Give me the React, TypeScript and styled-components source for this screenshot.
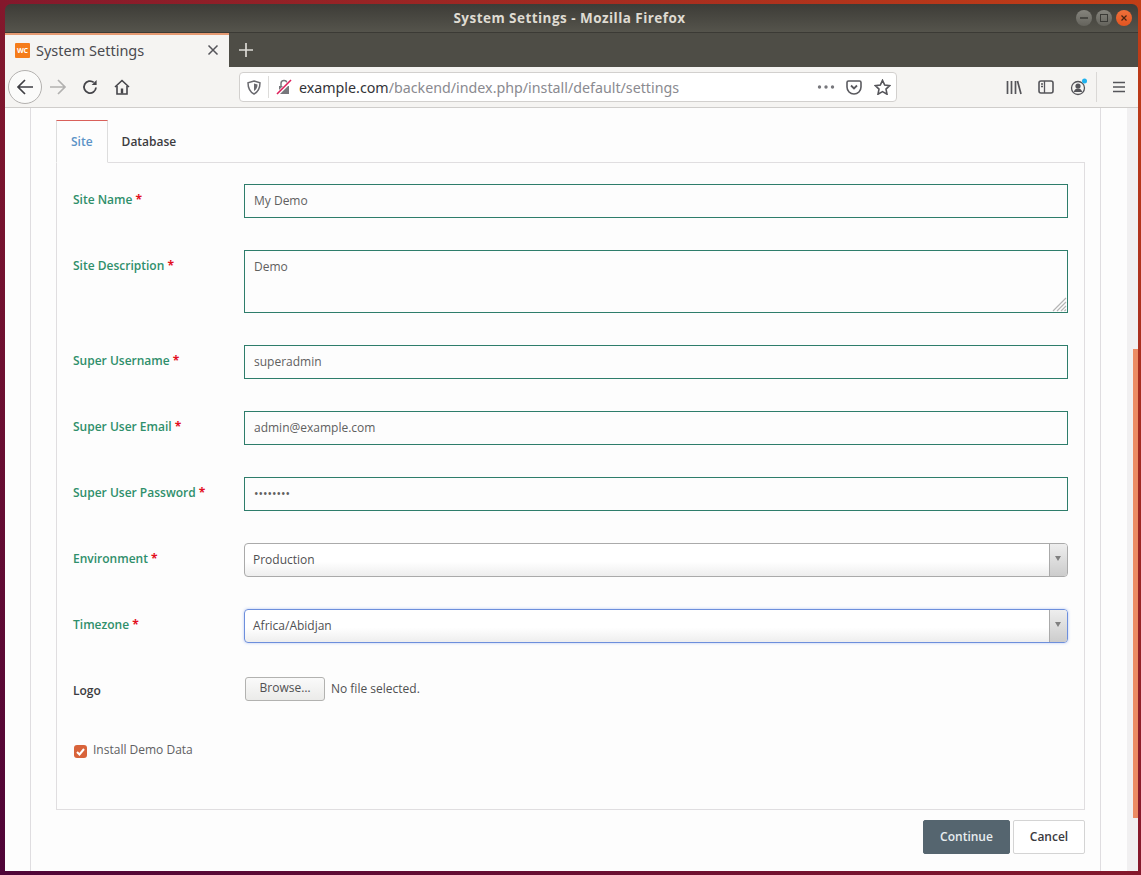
import { FC, ReactElement, ReactNode } from 'react';
import styled, { createGlobalStyle } from 'styled-components';

const GlobalStyle = createGlobalStyle`
    html, body, #root {
        margin: 0;
        height: 100%;
    }
    body {
        width: 1141px;
        height: 875px;
        overflow: hidden;
        font-family: 'Open Sans', 'Noto Sans', sans-serif;
        background: linear-gradient(to top right, #4f0538 0%, #84182c 50%, #c23e16 100%);
    }
`;

const Desktop = styled.div`
    width: 1141px;
    height: 875px;
    padding: 4px 3px 4px 5px;
    box-sizing: border-box;
`;

const Window = styled.div`
    height: 867px;
    display: flex;
    flex-direction: column;
    border-radius: 6px 6px 0 0;
    overflow: hidden;
`;

const TitleBar = styled.div`
    height: 29px;
    flex: none;
    display: flex;
    align-items: center;
    justify-content: flex-end;
    position: relative;
    padding-right: 6px;
    gap: 4px;
    background: linear-gradient(#3d3c37, #55544c);
    border-bottom: 1px solid #3b3a35;
    box-sizing: border-box;
`;

const WindowTitle = styled.div`
    position: absolute;
    left: 0;
    right: 0;
    text-align: center;
    padding-right: 4px;
    font-size: 13.5px;
    font-weight: 700;
    letter-spacing: 0.46px;
    color: #dfdbd2;
`;

const WindowButton = styled.div<{ $close?: boolean }>`
    width: 16px;
    height: 16px;
    border-radius: 50%;
    display: flex;
    align-items: center;
    justify-content: center;
    background: ${(p) => (p.$close ? 'linear-gradient(#f0703a, #e25420)' : 'linear-gradient(#85847d, #64635c)')};
    svg {
        display: block;
    }
`;

const TabStrip = styled.div`
    height: 34px;
    flex: none;
    display: flex;
    background: #4e4d46;
`;

const BrowserTab = styled.div`
    width: 224px;
    box-sizing: border-box;
    border-top: 2px solid #e59a72;
    background: #f5f4f2;
    display: flex;
    align-items: center;
    padding: 0 10px 2px;
    gap: 6px;
    color: #4a4a4f;
    font-size: 14.5px;
    font-family: 'Noto Sans', sans-serif;
`;

const Favicon = styled.div`
    width: 15px;
    height: 15px;
    flex: none;
    background: #f57c1a;
    border-radius: 1px;
    color: #fff;
    font-size: 7px;
    font-weight: 700;
    line-height: 15px;
    text-align: center;
`;

const TabLabel = styled.span`
    flex: 1;
`;

const NewTab = styled.div`
    width: 34px;
    display: flex;
    align-items: center;
    justify-content: center;
`;

const Toolbar = styled.div`
    height: 41px;
    flex: none;
    box-sizing: border-box;
    display: flex;
    align-items: center;
    padding-left: 3px;
    background: #f5f4f2;
    border-bottom: 1px solid #cfcdcb;
`;

const BackCircle = styled.div`
    width: 34px;
    height: 34px;
    box-sizing: border-box;
    border: 1px solid #b3b1af;
    border-radius: 50%;
    background: #fbfbfa;
    display: flex;
    align-items: center;
    justify-content: center;
    flex: none;
`;

const ToolIcon = styled.div<{ $w?: number }>`
    width: ${(p) => p.$w ?? 32}px;
    height: 32px;
    flex: none;
    display: flex;
    align-items: center;
    justify-content: center;
`;

const UrlBar = styled.div`
    width: 658px;
    height: 30px;
    margin-left: 101px;
    margin-right: 101px;
    flex: none;
    box-sizing: border-box;
    display: flex;
    align-items: center;
    background: #fff;
    border: 1px solid #d2d0ce;
    border-radius: 4px;
    font-family: 'Noto Sans', sans-serif;
    font-size: 14.25px;
`;

const UrlDivider = styled.div`
    width: 1px;
    height: 22px;
    background: #dddcda;
    flex: none;
`;

const UrlText = styled.div`
    flex: 1;
    color: #8a8a90;
    white-space: nowrap;
    b {
        font-weight: 400;
        color: #333338;
    }
`;

const ToolDivider = styled.div`
    width: 1px;
    height: 30px;
    margin: 0 6px 0 2px;
    background: #dad8d6;
    flex: none;
`;

const Viewport = styled.div`
    flex: 1;
    min-height: 0;
    display: flex;
    background: #fdfdfd;
`;

const Page = styled.div`
    flex: 1;
    padding-left: 25px;
`;

const Box = styled.div`
    width: 1071px;
    height: 100%;
    box-sizing: border-box;
    border-left: 1px solid #dfdde0;
    border-right: 1px solid #dfdde0;
    padding: 12px 15px 0 25px;
`;

const Tabs = styled.div`
    display: flex;
    margin-bottom: -1px;
    position: relative;
`;

const Tab = styled.div<{ $active?: boolean }>`
    height: 43px;
    box-sizing: border-box;
    padding: 0 14px 0 ${(p) => (p.$active ? 14 : 13)}px;
    border: 1px solid ${(p) => (p.$active ? '#ddd' : 'transparent')};
    border-top-color: ${(p) => (p.$active ? '#d9605a' : 'transparent')};
    border-bottom-color: ${(p) => (p.$active ? '#fdfdfd' : 'transparent')};
    line-height: 41px;
    font-size: 12px;
    font-weight: 600;
    color: ${(p) => (p.$active ? '#5b93c7' : '#3c3c40')};
`;

const Panel = styled.div`
    height: 648px;
    box-sizing: border-box;
    border: 1px solid #e0dee0;
    padding: 21px 16px 0;
    display: flex;
    flex-direction: column;
    gap: 32px;
`;

const Row = styled.div`
    display: grid;
    grid-template-columns: 171px 1fr;
`;

const Label = styled.label<{ $plain?: boolean }>`
    padding-top: 7px;
    font-size: 12px;
    line-height: 17px;
    font-weight: 600;
    color: ${(p) => (p.$plain ? '#3c3c40' : '#2f8f6b')};
`;

const Required = styled.span`
    color: #e3101f;
    font-weight: 700;
`;

const TextInput = styled.input`
    width: 100%;
    height: 34px;
    box-sizing: border-box;
    border: 1px solid #2e7d6b;
    border-radius: 0;
    background: #fdfdfd;
    padding: 0 9px 2px;
    font-family: inherit;
    font-size: 12px;
    color: #60605f;
    outline: none;
`;

const AreaWrap = styled.div`
    position: relative;
    height: 63px;
`;

const TextArea = styled.textarea`
    display: block;
    width: 100%;
    height: 63px;
    box-sizing: border-box;
    border: 1px solid #2e7d6b;
    border-radius: 0;
    background: #fdfdfd;
    padding: 7px 9px;
    font-family: inherit;
    font-size: 12px;
    color: #60605f;
    outline: none;
    resize: none;
`;

const ResizeGrip = styled.svg`
    position: absolute;
    right: 1px;
    bottom: 1px;
`;

const Select = styled.div<{ $focus?: boolean }>`
    height: 34px;
    box-sizing: border-box;
    display: flex;
    border: 1px solid ${(p) => (p.$focus ? '#6d8fdc' : '#aaa')};
    border-radius: 4px;
    overflow: hidden;
    background: linear-gradient(#fff 55%, #eeeeee);
    box-shadow: ${(p) => (p.$focus ? '0 0 3px rgba(90, 130, 230, 0.45)' : 'none')};
`;

const SelectValue = styled.div`
    flex: 1;
    padding-left: 8px;
    line-height: 32px;
    font-size: 12px;
    color: #505052;
`;

const SelectArrow = styled.div`
    width: 17px;
    border-left: 1px solid #aaa;
    background: linear-gradient(#eeeeee, #cccccc);
    position: relative;
    &::after {
        content: '';
        position: absolute;
        left: 5px;
        top: 12px;
        border: 3.5px solid transparent;
        border-top: 5px solid #808080;
        border-bottom: 0;
    }
`;

const FileField = styled.div`
    display: flex;
    align-items: center;
    gap: 6px;
    height: 24px;
    box-sizing: border-box;
    margin: 2px 0 0 1px;
    padding-bottom: 2px;
    font-size: 12px;
    color: #505052;
`;

const BrowseButton = styled.button`
    width: 80px;
    height: 24px;
    padding: 0 0 3px;
    margin-bottom: -2px;
    border: 1px solid #b2b2b0;
    border-radius: 3px;
    background: linear-gradient(#fafafa, #ebebe9);
    font-family: inherit;
    font-size: 12px;
    color: #505052;
`;

const CheckRow = styled.div`
    display: flex;
    align-items: flex-start;
    gap: 6px;
    padding: 8px 0 0 1px;
    font-size: 12px;
    line-height: 17px;
    color: #606062;
`;

const CheckMark = styled.div`
    width: 13px;
    height: 13px;
    margin-top: 4px;
    border-radius: 3px;
    background: #d8633a;
    display: flex;
    align-items: center;
    justify-content: center;
    flex: none;
`;

const Actions = styled.div`
    display: flex;
    justify-content: flex-end;
    gap: 3px;
    padding-top: 10px;
`;

const ActionButton = styled.button<{ $primary?: boolean }>`
    height: 34px;
    width: ${(p) => (p.$primary ? 87 : 72)}px;
    padding: 0 0 2px;
    border: 1px solid ${(p) => (p.$primary ? '#55656f' : '#d4d4d4')};
    border-radius: 2px;
    background: ${(p) => (p.$primary ? '#55656f' : '#fff')};
    color: ${(p) => (p.$primary ? '#e8edf0' : '#3a3a40')};
    font-family: inherit;
    font-size: 12px;
    font-weight: 600;
`;

const ScrollTrack = styled.div`
    width: 11px;
    flex: none;
    display: flex;
    justify-content: flex-end;
    padding-top: 241px;
    box-sizing: border-box;
    background: #f1f0f1;
`;

const ScrollThumb = styled.div`
    width: 5px;
    height: 469px;
    background: #ec8c64;
`;

interface FieldProps {
    label: string;
    required?: boolean;
    plain?: boolean;
    children: ReactNode;
}

const Field: FC<FieldProps> = (props: FieldProps): ReactElement => {
    const { label, required, plain, children } = props;

    return (
        <Row>
            <Label $plain={plain}>
                {label}
                {required && <Required> *</Required>}
            </Label>
            <div>{children}</div>
        </Row>
    );
};

const BrowserChrome: FC = (): ReactElement => (
    <>
        <TitleBar>
            <WindowTitle>System Settings - Mozilla Firefox</WindowTitle>
            <WindowButton>
                <svg width="10" height="10"><path d="M1 5h8" stroke="#3a3a36" strokeWidth="1.3" /></svg>
            </WindowButton>
            <WindowButton>
                <svg width="10" height="10"><rect x="1.5" y="1.5" width="7" height="7" fill="none" stroke="#3a3a36" /></svg>
            </WindowButton>
            <WindowButton $close>
                <svg width="10" height="10"><path d="M2.5 2.5l5 5M7.5 2.5l-5 5" stroke="#4a2410" strokeWidth="1.2" /></svg>
            </WindowButton>
        </TitleBar>
        <TabStrip>
            <BrowserTab>
                <Favicon>WC</Favicon>
                <TabLabel>System Settings</TabLabel>
                <svg width="12" height="12"><path d="M1.5 1.5l9 9M10.5 1.5l-9 9" stroke="#55555a" strokeWidth="1.5" /></svg>
            </BrowserTab>
            <NewTab>
                <svg width="16" height="16"><path d="M8 1v14M1 8h14" stroke="#dcdad5" strokeWidth="1.7" /></svg>
            </NewTab>
        </TabStrip>
        <Toolbar>
            <BackCircle>
                <svg width="18" height="18" fill="none" stroke="#3f3f44" strokeWidth="1.7"><path d="M17 9H2M9 2L2 9l7 7" /></svg>
            </BackCircle>
            <ToolIcon>
                <svg width="18" height="18" fill="none" stroke="#b2b1b0" strokeWidth="1.7"><path d="M1 9h15M9 2l7 7-7 7" /></svg>
            </ToolIcon>
            <ToolIcon>
                <svg width="16" height="16" fill="none" stroke="#45454a" strokeWidth="1.8">
                    <path d="M14 8.5A6 6 0 1 1 11.8 3.4" />
                    <path d="M14.6 1v5h-5z" fill="#45454a" stroke="none" />
                </svg>
            </ToolIcon>
            <ToolIcon>
                <svg width="16" height="16" fill="none" stroke="#45454a" strokeWidth="1.6">
                    <path d="M1 8l7-6.500L15 8" />
                    <path d="M3 7v8h10V7" />
                    <rect x="6.800" y="9.500" width="2.400" height="5" fill="#45454a" stroke="none" />
                </svg>
            </ToolIcon>
            <UrlBar>
                <ToolIcon $w={28}>
                    <svg width="14" height="15" fill="none" stroke="#6a6a6f" strokeWidth="1.500">
                        <path d="M7 1l6 1.800c0 5-1.500 9-6 11.200C2.500 11.800 1 7.800 1 2.800z" />
                        <path d="M7 3.500l3.500 1c0 3-1 5-3.500 6.500z" fill="#6a6a6f" stroke="none" />
                    </svg>
                </ToolIcon>
                <UrlDivider />
                <ToolIcon $w={30}>
                    <svg width="16" height="16" fill="none">
                        <path d="M3 7h10v8H3z" fill="#77777c" />
                        <path d="M5 7V4.500a3 3 0 0 1 6 0V7" stroke="#77777c" strokeWidth="1.500" />
                        <path d="M1 15.500L15 1.500" stroke="#fff" strokeWidth="3.500" />
                        <path d="M1 15L15 1" stroke="#dd1f5a" strokeWidth="1.600" />
                    </svg>
                </ToolIcon>
                <UrlText>
                    <b>example.com</b>/backend/index.php/install/default/settings
                </UrlText>
                <ToolIcon $w={28}>
                    <svg width="18" height="4" fill="#77777c">
                        <circle cx="2.500" cy="2" r="1.700" />
                        <circle cx="9" cy="2" r="1.700" />
                        <circle cx="15.500" cy="2" r="1.700" />
                    </svg>
                </ToolIcon>
                <ToolIcon $w={28}>
                    <svg width="16" height="15" fill="none" stroke="#5a5a5f" strokeWidth="1.600">
                        <path d="M1 2.500C1 1.500 1.500 1 2.500 1h11c1 0 1.500.5 1.500 1.500V7a7 7 0 0 1-14 0z" />
                        <path d="M5 5.500l3 3 3-3" strokeWidth="1.800" />
                    </svg>
                </ToolIcon>
                <ToolIcon $w={28}>
                    <svg width="17" height="16" fill="none" stroke="#55555a" strokeWidth="1.600">
                        <path d="M8.500 1.300l2.200 4.700 5 .6-3.700 3.500 1 5.100-4.500-2.600-4.500 2.600 1-5.100L1.300 6.600l5-.6z" />
                    </svg>
                </ToolIcon>
            </UrlBar>
            <ToolIcon>
                <svg width="16" height="15" fill="none" stroke="#55555a" strokeWidth="1.700">
                    <path d="M1.500 1v13M5.500 1v13M9.500 1v13M11.500 1l3.500 13" />
                </svg>
            </ToolIcon>
            <ToolIcon>
                <svg width="16" height="14" fill="none" stroke="#55555a" strokeWidth="1.600">
                    <rect x="1" y="1" width="14" height="12" rx="2" />
                    <path d="M6.500 1v12M3 4h2M3 6.500h2" strokeWidth="1.300" />
                </svg>
            </ToolIcon>
            <ToolIcon>
                <svg width="18" height="18" fill="none" stroke="#55555a" strokeWidth="1.300">
                    <circle cx="9" cy="10" r="6.500" />
                    <circle cx="9" cy="8" r="2.600" fill="#55555a" stroke="none" />
                    <path d="M4.800 14c.7-2.600 2.300-3.500 4.200-3.500s3.500.9 4.200 3.500z" fill="#55555a" stroke="none" />
                    <circle cx="15.500" cy="3" r="2.500" fill="#1fb2ee" stroke="none" />
                </svg>
            </ToolIcon>
            <ToolDivider />
            <ToolIcon>
                <svg width="14" height="12" stroke="#55555a" strokeWidth="1.600"><path d="M1 1.500h12M1 6h12M1 10.500h12" /></svg>
            </ToolIcon>
        </Toolbar>
    </>
);

const SettingsForm: FC = (): ReactElement => (
    <Box>
        <Tabs>
            <Tab $active>Site</Tab>
            <Tab>Database</Tab>
        </Tabs>
        <Panel>
            <Field label="Site Name" required>
                <TextInput defaultValue="My Demo" />
            </Field>
            <Field label="Site Description" required>
                <AreaWrap>
                    <TextArea defaultValue="Demo" />
                    <ResizeGrip width="15" height="15" stroke="#b5b5b5" strokeWidth="1.200">
                        <path d="M1 14L14 1M5 14L14 5M9 14l5-5M12.500 14l1.500-1.500" />
                    </ResizeGrip>
                </AreaWrap>
            </Field>
            <Field label="Super Username" required>
                <TextInput defaultValue="superadmin" />
            </Field>
            <Field label="Super User Email" required>
                <TextInput defaultValue="admin@example.com" />
            </Field>
            <Field label="Super User Password" required>
                <TextInput type="password" defaultValue="12345678" />
            </Field>
            <Field label="Environment" required>
                <Select>
                    <SelectValue>Production</SelectValue>
                    <SelectArrow />
                </Select>
            </Field>
            <Field label="Timezone" required>
                <Select $focus>
                    <SelectValue>Africa/Abidjan</SelectValue>
                    <SelectArrow />
                </Select>
            </Field>
            <Field label="Logo" plain>
                <FileField>
                    <BrowseButton>Browse…</BrowseButton>
                    No file selected.
                </FileField>
            </Field>
            <CheckRow>
                <CheckMark>
                    <svg width="9" height="8" fill="none" stroke="#fff" strokeWidth="2"><path d="M1 4l2.500 2.500L8 1" /></svg>
                </CheckMark>
                Install Demo Data
            </CheckRow>
        </Panel>
        <Actions>
            <ActionButton $primary>Continue</ActionButton>
            <ActionButton>Cancel</ActionButton>
        </Actions>
    </Box>
);

const App: FC = (): ReactElement => (
    <>
        <GlobalStyle />
        <Desktop>
            <Window>
                <BrowserChrome />
                <Viewport>
                    <Page>
                        <SettingsForm />
                    </Page>
                    <ScrollTrack>
                        <ScrollThumb />
                    </ScrollTrack>
                </Viewport>
            </Window>
        </Desktop>
    </>
);

export default App;
